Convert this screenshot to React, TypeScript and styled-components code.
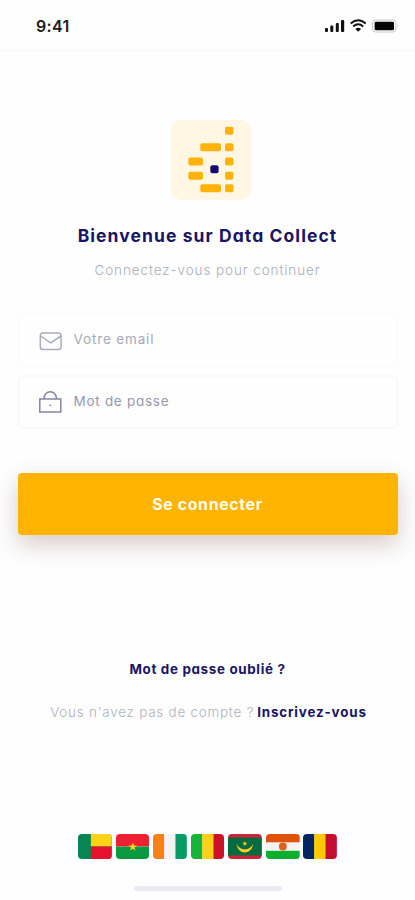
import React from "react";
import styled, { createGlobalStyle } from "styled-components";

const Global = createGlobalStyle`
  *, *::before, *::after { box-sizing: border-box; }
  body { margin: 0; background: #fefefe; font-family: Inter, "Open Sans", sans-serif; font-feature-settings: "cv11"; }
  button, input { font: inherit; font-feature-settings: inherit; letter-spacing: inherit; }
`;

const navy = "#1a1464";
const amber = "#ffb400";

const Screen = styled.main`
  width: 415px;
  height: 900px;
  display: flex;
  flex-direction: column;
  align-items: center;
  overflow: hidden;
  background: #fefefe;
`;

const StatusBar = styled.header`
  width: 100%;
  height: 52px;
  flex: none;
  display: flex;
  justify-content: space-between;
  align-items: flex-start;
  padding: 16px 15px 0 36px;
  border-bottom: 3px solid #fafafa;
`;

const Time = styled.span`
  font-size: 16px;
  line-height: 20px;
  font-weight: 600;
  letter-spacing: 0.3px;
  color: #1c1c1c;
`;

const Logo = styled.svg`
  display: block;
  flex: none;
  width: 80px;
  height: 80px;
  margin: 68px 0 0 7px;
`;

const Title = styled.h1`
  margin: 25px 0 0;
  font-size: 17.5px;
  line-height: 22px;
  font-weight: 700;
  letter-spacing: 1.08px;
  white-space: nowrap;
  color: ${navy};
`;

const Subtitle = styled.p`
  margin: 13px 0 0;
  font-size: 13.5px;
  line-height: 20px;
  font-weight: 300;
  letter-spacing: 0.9px;
  white-space: nowrap;
  color: #a9aebd;
`;

const Form = styled.form`
  width: 380px;
  display: flex;
  flex-direction: column;
  gap: 8px;
  margin-top: 33px;
`;

const Field = styled.label<{ $tone: string }>`
  height: 54px;
  display: flex;
  align-items: center;
  gap: 11px;
  padding: 0 16px 0 19px;
  border: 2px solid ${(p) => p.$tone};
  border-radius: 5px;
`;

const FieldIcon = styled.svg`
  flex: none;
  width: 24px;
  height: 24px;
  fill: none;
`;

const Input = styled.input<{ $spacing: number; $color: string; $roundA: boolean }>`
  flex: 1;
  min-width: 0;
  height: 24px;
  padding: 0;
  border: 0;
  outline: 0;
  background: transparent;
  font-size: 13.5px;
  font-feature-settings: "cv11" ${(p) => (p.$roundA ? 1 : 0)};
  margin-top: -2px;
  letter-spacing: ${(p) => p.$spacing}px;
  &::placeholder { color: ${(p) => p.$color}; opacity: 1; }
`;

const Submit = styled.button`
  height: 62px;
  margin-top: 36px;
  border: 0;
  border-radius: 4px;
  background: ${amber};
  color: #fffdf2;
  font-size: 15.8px;
  font-weight: 700;
  letter-spacing: 0.7px;
  box-shadow: 0 9px 24px rgba(80, 20, 30, 0.23);
`;

const Forgot = styled.a`
  margin-top: 124px;
  font-size: 13.4px;
  line-height: 20px;
  font-weight: 700;
  letter-spacing: 0.66px;
  white-space: nowrap;
  color: ${navy};
`;

const SignUp = styled.p`
  display: flex;
  gap: 3px;
  margin: 23px 0 0 2px;
  font-size: 13.4px;
  line-height: 20px;
  white-space: nowrap;
`;

const Question = styled.span`
  font-weight: 300;
  font-feature-settings: "cv11" 0;
  letter-spacing: 0.79px;
  color: #adb2bc;
`;

const SignUpLink = styled.a`
  font-weight: 700;
  letter-spacing: 0.84px;
  color: ${navy};
`;

const Flags = styled.div`
  display: flex;
  gap: 3.9px;
  margin-top: 112px;
`;

const Flag = styled.svg`
  display: block;
  width: 33.7px;
  height: 25px;
  border-radius: 4px;
`;

const HomeBar = styled.div`
  width: 148px;
  height: 5px;
  margin-top: 27px;
  border-radius: 2px;
  background: #e8ebf3;
`;

const Vertical = ({ colors }: { colors: string[] }) => (
  <Flag viewBox="0 0 34 25" preserveAspectRatio="none">
    {colors.map((c, i) => (
      <rect key={c} x={i * 11.33} width="11.5" height="25" fill={c} />
    ))}
  </Flag>
);

const StatusIcons = () => (
  <svg width="77" height="20" viewBox="323 16 77 20">
    <g fill="#111">
      <rect x="325" y="28" width="3" height="4" rx="1" />
      <rect x="330.3" y="25.4" width="3" height="6.6" rx="1" />
      <rect x="335.8" y="23" width="3" height="9" rx="1" />
      <rect x="341" y="20" width="3.2" height="12" rx="1" />
      <path d="M355.3 28.9Q358.2 26.8 361.1 28.9L358.2 31.8Z" />
    </g>
    <g fill="none" stroke="#111" strokeWidth="2">
      <path d="M350.7 23.4Q358.2 17 365.7 23.4" />
      <path d="M353.2 26.4Q358.2 22.2 363.2 26.4" />
    </g>
    <rect x="372.5" y="20" width="23.4" height="12" rx="3" fill="none" stroke="#c8c8c8" />
    <rect x="374.6" y="21.8" width="19.4" height="8.4" rx="1.3" fill="#050505" />
    <path d="M397.2 24.2Q398.8 26 397.2 27.8Z" fill="#bbb" />
  </svg>
);

const logoBars: [number, number, number][] = [
  [54, 6.7, 8.5],
  [29.3, 23.3, 20.7], [54, 23.3, 8.5],
  [17.3, 37.5, 14.7], [54, 37.5, 8.5],
  [17.3, 51.7, 14.7], [54, 51.7, 8.5],
  [29.3, 64.3, 20.7], [54, 64.3, 8.5],
];

export default function App() {
  return (
    <Screen>
      <Global />
      <StatusBar>
        <Time>9:41</Time>
        <StatusIcons />
      </StatusBar>
      <Logo viewBox="0 0 80 80">
        <rect width="80" height="80" rx="10" fill="#fff7e3" />
        {logoBars.map(([x, y, w]) => (
          <rect key={`${x}-${y}`} x={x} y={y} width={w} height="8" rx="2" fill="#ffb20a" />
        ))}
        <rect x="39.3" y="45.3" width="8.3" height="8" rx="2" fill="#150a68" />
      </Logo>
      <Title>Bienvenue sur Data Collect</Title>
      <Subtitle>Connectez-vous pour continuer</Subtitle>
      <Form onSubmit={(e) => e.preventDefault()}>
        <Field $tone="#fafbfd">
          <FieldIcon viewBox="0 0 24 24" stroke="#a9acbd" strokeWidth="1.5">
            <rect x="1.3" y="5" width="20.8" height="16.5" rx="2.8" />
            <path d="M1.5 8L11.7 14.8L22 8" />
          </FieldIcon>
          <Input type="email" placeholder="Votre email" $spacing={0.85} $color="#a6a9b9" $roundA={false} />
        </Field>
        <Field $tone="#f9f9fd">
          <FieldIcon viewBox="0 0 24 24" stroke="#8385a3" strokeWidth="1.5">
            <rect x="0.8" y="9" width="21" height="13" />
            <path d="M5 9C5 -0.6 17.5 -0.6 17.5 9" />
            <circle cx="11.2" cy="15.3" r="0.9" fill="#8385a3" stroke="none" />
          </FieldIcon>
          <Input type="password" placeholder="Mot de passe" $spacing={0.72} $color="#9699ac" $roundA />
        </Field>
        <Submit type="submit">Se connecter</Submit>
      </Form>
      <Forgot>Mot de passe oublié ?</Forgot>
      <SignUp>
        <Question>Vous n'avez pas de compte ?</Question>
        <SignUpLink>Inscrivez-vous</SignUpLink>
      </SignUp>
      <Flags>
        <Flag viewBox="0 0 34 25" preserveAspectRatio="none">
          <rect width="34" height="25" fill="#078553" />
          <rect x="13" width="21" height="12.5" fill="#fcd116" />
          <rect x="13" y="12.5" width="21" height="12.5" fill="#e8112d" />
        </Flag>
        <Flag viewBox="0 0 34 25" preserveAspectRatio="none">
          <rect width="34" height="12.5" fill="#ec2030" />
          <rect y="12.5" width="34" height="12.5" fill="#0b9a42" />
          <path d="M17 8.5l1.2 3h3.2l-2.6 2 1 3.1-2.8-1.9-2.8 1.9 1-3.1-2.6-2h3.2z" fill="#fcd116" />
        </Flag>
        <Vertical colors={["#f98012", "#f4f2f2", "#059b67"]} />
        <Vertical colors={["#14b53a", "#fcd116", "#ce1126"]} />
        <Flag viewBox="0 0 34 25" preserveAspectRatio="none">
          <rect width="34" height="25" fill="#ca2436" />
          <rect y="3.5" width="34" height="18" fill="#086b3f" />
          <path d="M8.5 9.5C10 21.5 24 21.5 25.5 9.5C22.5 17.2 11.5 17.2 8.5 9.5Z" fill="#f3cf25" />
          <path d="M17 7l.7 1.8h1.8l-1.5 1.2.6 1.8-1.6-1.1-1.6 1.1.6-1.8-1.5-1.2h1.8z" fill="#f3cf25" />
        </Flag>
        <Flag viewBox="0 0 34 25" preserveAspectRatio="none">
          <rect width="34" height="25" fill="#f5f3f2" />
          <rect width="34" height="8.3" fill="#e05206" />
          <rect y="16.8" width="34" height="8.2" fill="#0db02b" />
          <circle cx="17" cy="12.5" r="3.9" fill="#e05a1c" />
        </Flag>
        <Vertical colors={["#002664", "#fecb00", "#c60c30"]} />
      </Flags>
      <HomeBar />
    </Screen>
  );
}
